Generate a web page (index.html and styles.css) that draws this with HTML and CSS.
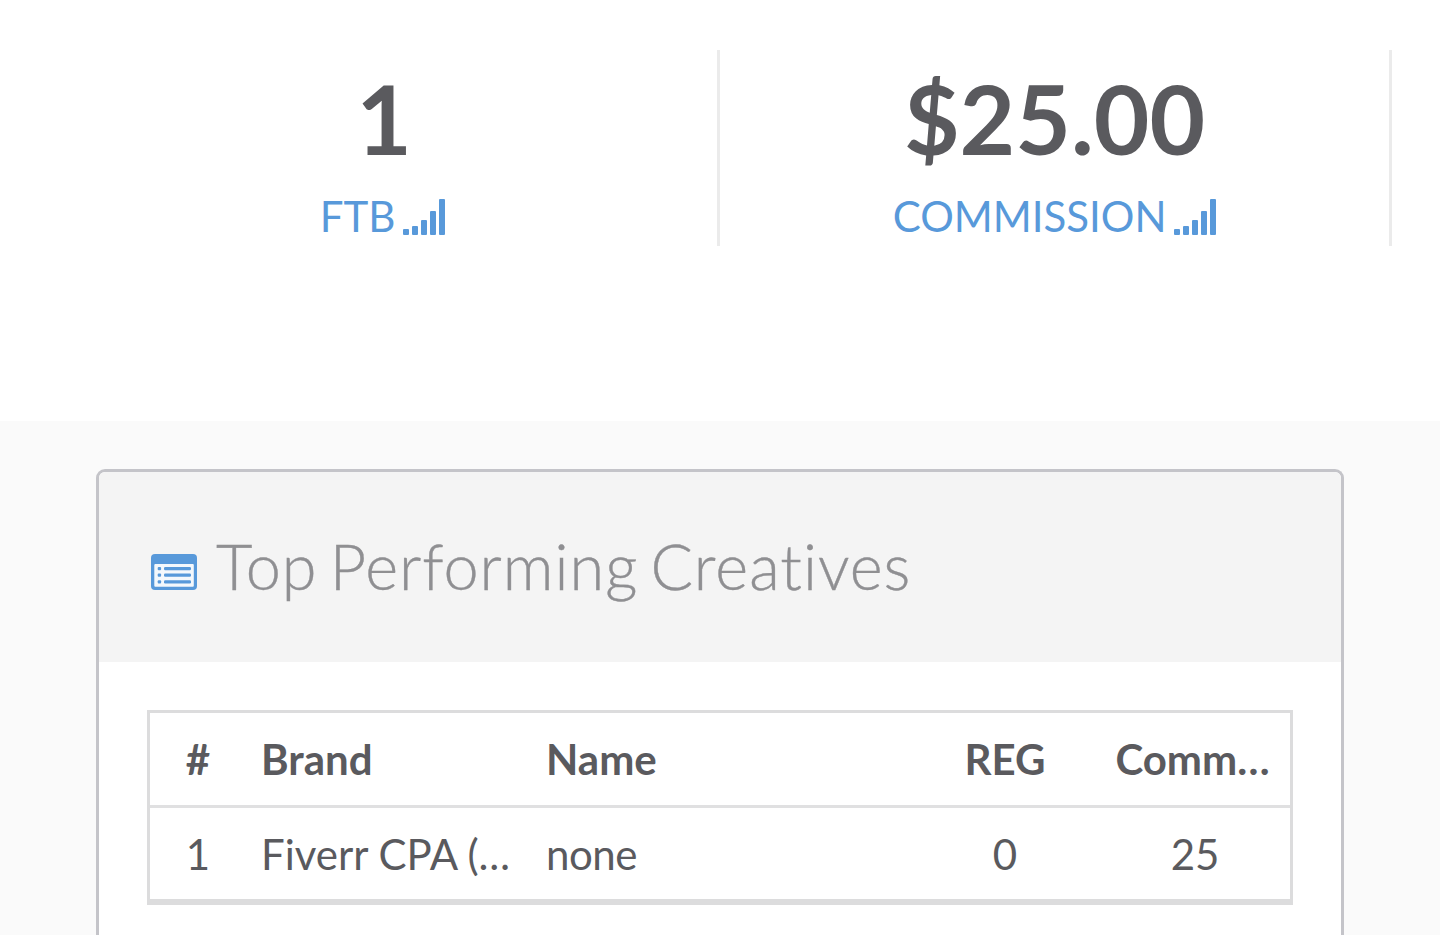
FILE: index.html
```html
<!DOCTYPE html>
<html lang="en">
<head>
    <meta charset="UTF-8">
    <meta name="viewport" content="width=device-width, initial-scale=1.0">
    <title>Dashboard</title>
    <link rel="stylesheet" href="styles.css">
</head>
<body>
    <!-- Totals -->
    <div class="totals">
        <div class="total">
            <div class="total-value single">1</div>
            <a class="total-label">FTB
                <svg class="signal" viewBox="0 0 42 36"><rect y="30" width="6" height="6" rx="1"/><rect x="9" y="27" width="6" height="9" rx="1"/><rect x="18" y="21" width="6" height="15" rx="1"/><rect x="27" y="12" width="6" height="24" rx="1"/><rect x="36" width="6" height="36" rx="1"/></svg>
            </a>
        </div>
        <div class="total">
            <div class="total-value">$25.00</div>
            <a class="total-label">COMMISSION
                <svg class="signal" viewBox="0 0 42 36"><rect y="30" width="6" height="6" rx="1"/><rect x="9" y="27" width="6" height="9" rx="1"/><rect x="18" y="21" width="6" height="15" rx="1"/><rect x="27" y="12" width="6" height="24" rx="1"/><rect x="36" width="6" height="36" rx="1"/></svg>
            </a>
        </div>
    </div>

    <!-- Creatives -->
    <div class="content">
        <div class="panel">
            <div class="panel-header">
                <svg class="list-icon" viewBox="0 0 46 36">
                    <rect width="46" height="36" rx="4"/>
                    <rect class="sheet" x="3.300" y="10" width="39.500" height="22.700" rx="1"/>
                    <rect x="6.700" y="13" width="3.400" height="3.300" rx="1"/><rect x="13" y="13" width="27" height="3.300" rx="1.300"/>
                    <rect x="6.700" y="19.500" width="3.400" height="3.300" rx="1"/><rect x="13" y="19.500" width="27" height="3.300" rx="1.300"/>
                    <rect x="6.700" y="26.200" width="3.400" height="3.300" rx="1"/><rect x="13" y="26.200" width="27" height="3.300" rx="1.300"/>
                </svg>
                <h2>Top Performing Creatives</h2>
            </div>
            <div class="panel-body">
                <table class="creatives">
                    <thead>
                        <tr><th class="col-num">#</th><th class="col-brand">Brand</th><th class="col-name">Name</th><th class="col-reg">REG</th><th class="col-comm">Comm…</th></tr>
                    </thead>
                    <tbody>
                        <tr><td class="col-num">1</td><td class="col-brand">Fiverr CPA (…</td><td class="col-name">none</td><td class="col-reg">0</td><td class="col-comm">25</td></tr>
                    </tbody>
                </table>
            </div>
        </div>
    </div>
</body>
</html>
```
FILE: styles.css
```css
* {
    box-sizing: border-box;
}
body {
    margin: 0;
    background: #fafafa;
    color: #5a5a5e;
    font-family: Lato, sans-serif;
}

/* Totals */
.totals {
    display: flex;
    height: 421px;
    padding: 50px 48px 0;
    background: #fff;
}
.total {
    width: 672px;
    height: 196px;
    padding-top: 8px;
    border-right: 3px solid #ebebeb;
    text-align: center;
}
.total-value {
    font-size: 96px;
    font-weight: 700;
    line-height: 120px;
}
.total-value.single {
    padding-left: 3px;
}
.total-label {
    display: block;
    margin-top: 13px;
    color: #5899da;
    font-size: 42px;
    line-height: 50px;
}
.signal {
    width: 42px;
    height: 36px;
    margin-left: -3px;
    vertical-align: -3px;
    fill: #5899da;
}

/* Creatives */
.content {
    padding: 48px 96px 0;
}
.panel {
    height: 466px;
    border: 3px solid #c4c4c9;
    border-bottom: 0;
    border-radius: 9px 9px 0 0;
    background: #fff;
}
.panel-header {
    display: flex;
    align-items: center;
    height: 190px;
    padding: 0 52px;
    border-radius: 6px 6px 0 0;
    background: #f4f4f4;
}
.list-icon {
    width: 46px;
    height: 36px;
    margin: 10px 19px 0 0;
    fill: #5899da;
}
.list-icon .sheet {
    fill: #f4f8fc;
}
.panel-header h2 {
    margin: 0 0 2px;
    color: #8f8f92;
    font-size: 63px;
    font-weight: 300;
    line-height: 76px;
    letter-spacing: 1px;
    word-spacing: -6px;
    -webkit-text-stroke: 0.4px #8f8f92;
}
.panel-body {
    padding: 48px;
}
.creatives {
    width: 1146px;
    table-layout: fixed;
    border-collapse: separate;
    border-spacing: 0;
    border: 3px solid #dcdcdd;
    border-bottom-width: 6px;
    font-size: 42px;
    line-height: 50px;
}
.creatives th,
.creatives td {
    height: 91px;
    padding: 0;
    text-align: left;
    white-space: nowrap;
}
.creatives th {
    height: 95px;
    border-bottom: 3px solid #e0e0e1;
    font-weight: 700;
}
.creatives .col-num {
    width: 96px;
    text-align: center;
}
.creatives .col-brand {
    width: 285px;
    padding-left: 15px;
}
.creatives .col-name {
    padding-left: 15px;
}
.creatives td.col-name {
    letter-spacing: -0.5px;
}
.creatives .col-reg,
.creatives .col-comm {
    width: 190px;
    text-align: center;
}
.creatives th.col-comm {
    padding-right: 5px;
}
```
